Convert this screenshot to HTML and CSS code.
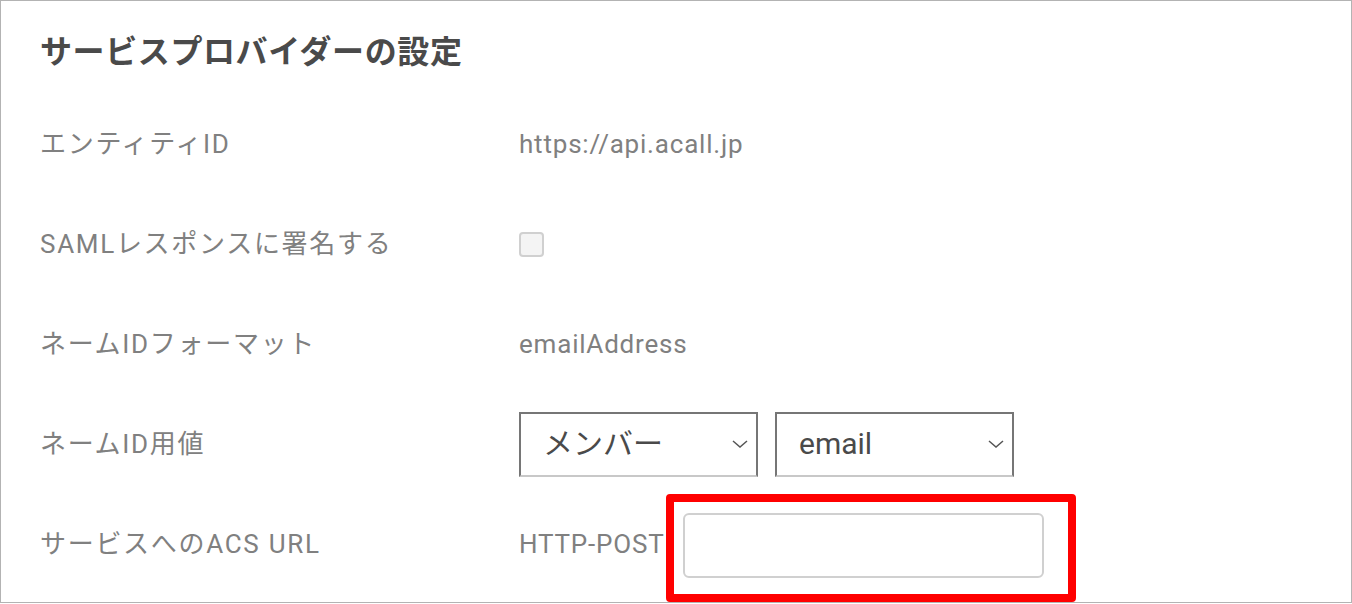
FILE: index.html
```html
<!DOCTYPE html>
<html lang="ja">
<head>
<meta charset="utf-8">
<title>サービスプロバイダーの設定</title>
<link rel="stylesheet" href="styles.css">
</head>
<body>
<div class="frame">
  <h2 class="title">サービスプロバイダーの設定</h2>
  <div class="form">
    <div class="label">エンティティID</div>
    <div class="value">https://api.acall.jp</div>

    <div class="label">SAMLレスポンスに署名する</div>
    <div class="value"><span class="checkbox"></span></div>

    <div class="label">ネームIDフォーマット</div>
    <div class="value">emailAddress</div>

    <div class="label">ネームID用値</div>
    <div class="value selects">
      <div class="select"><span>メンバー</span>
        <svg class="chev" width="16" height="8" viewBox="0 0 16 8"><path d="M1 1 L8 7 L15 1" fill="none" stroke="#555" stroke-width="1.5"/></svg>
      </div>
      <div class="select"><span>email</span>
        <svg class="chev" width="16" height="8" viewBox="0 0 16 8"><path d="M1 1 L8 7 L15 1" fill="none" stroke="#555" stroke-width="1.5"/></svg>
      </div>
    </div>

    <div class="label">サービスへのACS URL</div>
    <div class="value acs"><span class="method">HTTP-POST</span><span class="input"></span></div>
  </div>
  <div class="highlight"></div>
</div>
</body>
</html>
```

FILE: styles.css
```css
* { box-sizing: border-box; }
html, body { margin: 0; padding: 0; background: #fff; }
body { font-family: Roboto, "Noto Sans CJK JP", sans-serif; }

.frame {
  position: relative;
  width: 1352px;
  height: 603px;
  border: 1px solid #b3b3b3;
  padding-left: 39px;
  overflow: hidden;
  background: #fff;
}

.title {
  margin: 31px 0 22px;
  font-size: 32px;
  line-height: 40px;
  font-weight: 700;
  color: #4a4a4a;
  letter-spacing: 0.6px;
}

.form {
  display: grid;
  grid-template-columns: 479px 1fr;
  grid-auto-rows: 100px;
  align-items: center;
}

.label {
  font-size: 26px;
  color: #808080;
  letter-spacing: 1.7px;
  line-height: 32px;
}

.value {
  font-size: 26px;
  color: #808080;
  letter-spacing: 0.8px;
  line-height: 32px;
}

.checkbox {
  display: block;
  width: 25px;
  height: 25px;
  border: 2px solid #d0d0d0;
  border-radius: 4px;
  background: #f4f4f4;
}

.selects { display: flex; gap: 17px; }

.select {
  width: 239px;
  height: 65px;
  border: 2px solid #767676;
  border-bottom-color: #c8c8c8;
  display: flex;
  align-items: center;
  justify-content: space-between;
  padding: 0 8px 0 22px;
  font-size: 30px;
  color: #4a4a4a;
  letter-spacing: 0;
}

.acs { display: flex; align-items: center; gap: 19px; }

.input {
  display: block;
  width: 361px;
  height: 65px;
  border: 2px solid #d0d0d0;
  border-radius: 6px;
  margin-top: 3px;
}

.highlight {
  position: absolute;
  left: 665px;
  top: 493px;
  width: 410px;
  height: 108px;
  border: 8px solid #ff0000;
  border-radius: 4px;
}
```
